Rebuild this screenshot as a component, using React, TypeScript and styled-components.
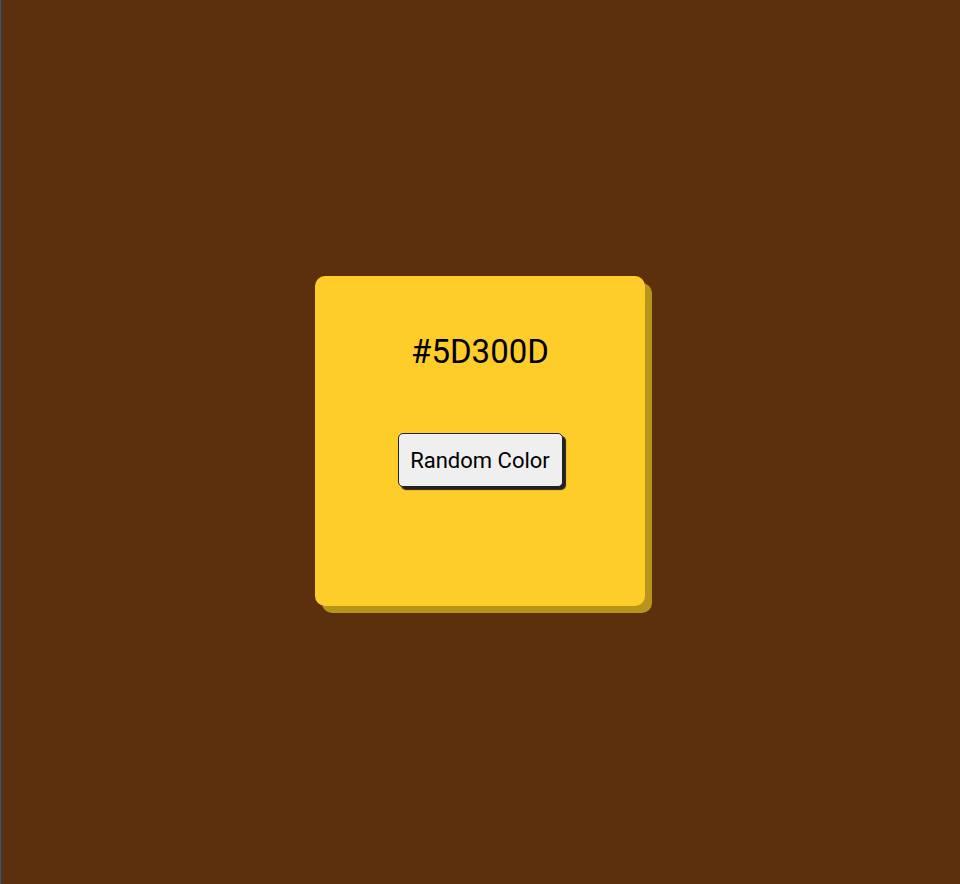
import React from "react";
import styled, { createGlobalStyle } from "styled-components";

const Global = createGlobalStyle`
  html, body { margin: 0; padding: 0; }
  body { background: #5d300d; font-family: Roboto, "Liberation Sans", sans-serif; }
`;

const Page = styled.div`
  height: 884px;
  box-shadow: inset 1px 0 0 #2a5a8a;
  display: flex;
  align-items: center;
  justify-content: center;
  background: #5d300d;
`;

const Card = styled.div`
  width: 330px;
  height: 330px;
  box-sizing: border-box;
  background: #ffcd2a;
  border-radius: 10px;
  box-shadow: 7px 7px 0 #b8951a;
  display: flex;
  flex-direction: column;
  align-items: center;
  padding-top: 56px;
  margin-top: -2px;
`;

const Hex = styled.h2`
  margin: 0;
  font-size: 33px;
  font-weight: 400;
  line-height: 40px;
  color: #000;
`;

const Button = styled.button`
  margin-top: 61px;
  width: 165px;
  height: 54px;
  font-family: Roboto, "Liberation Sans", sans-serif;
  font-size: 22px;
  color: #000;
  background: #efefef;
  border: 1px solid #222;
  border-radius: 5px;
  box-shadow: 3px 3px 1px #222;
  padding: 0;
  cursor: pointer;
`;

export default function App() {
  return (
    <>
      <Global />
      <Page>
        <Card>
          <Hex>#5D300D</Hex>
          <Button>Random Color</Button>
        </Card>
      </Page>
    </>
  );
}
